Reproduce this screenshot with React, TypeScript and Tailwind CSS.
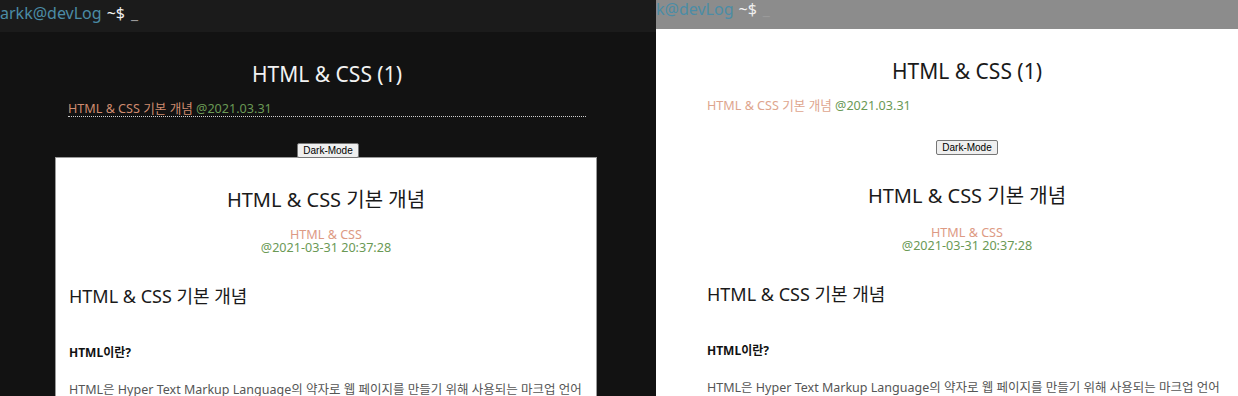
const font = { fontFamily: '"Noto Sans", "Noto Sans CJK KR", sans-serif' }

function Prompt({ name, dark }: { name: string; dark: boolean }) {
  return (
    <div
      className={`flex items-center whitespace-nowrap overflow-hidden text-[16px] ${
        dark ? 'h-[32px] bg-[#1b1b1b] pb-[6px]' : 'h-[29px] bg-[#8c8c8c] pb-[12px]'
      }`}
    >
      <span className="text-[#4b8ca6]">{name}</span>
      <span className="ml-[5px] text-[#f0f0f0]">~$</span>
      <span className="ml-[6px] text-[#9a9a9a]">_</span>
    </div>
  )
}

function DarkButton() {
  return (
    <button
      className="px-[5px] h-[15px] leading-[13px] text-[10px] text-black bg-[#efefef] border border-[#767676] rounded-[2px]"
      style={{ fontFamily: '"Liberation Sans", Arial, sans-serif' }}
    >
      Dark-Mode
    </button>
  )
}

function Article({ tight }: { tight?: boolean }) {
  return (
    <>
      <h1 className="text-center text-[20px] text-[#1a1a1a] leading-[28px]">HTML &amp; CSS 기본 개념</h1>
      <div className={`${tight ? 'mt-[16px]' : 'mt-[14px]'} text-center text-[12.6px] leading-[13px]`}>
        <div className="text-[#dd9a84]">HTML &amp; CSS</div>
        <div className="text-[#6a9955]">@2021-03-31 20:37:28</div>
      </div>
      <h2 className="mt-[30px] text-[18px] text-[#1a1a1a] leading-[24px]">HTML &amp; CSS 기본 개념</h2>
      <h4 className="mt-[37px] text-[12px] font-bold text-[#111] leading-[16px]">HTML이란?</h4>
      <p className="mt-[19px] text-[12.5px] text-[#555] leading-[20px] whitespace-nowrap">
        HTML은 Hyper Text Markup Language의 약자로 웹 페이지를 만들기 위해 사용되는 마크업 언어
      </p>
    </>
  )
}

export default function App() {
  return (
    <div className="flex w-[1238px] h-[396px] overflow-hidden" style={font}>
      <div className="w-[656px] shrink-0 h-full bg-[#121212] overflow-hidden">
        <Prompt name="arkk@devLog" dark />
        <div className="w-[518px] ml-[68px]">
          <h1 className="mt-[28px] text-center text-[21px] text-[#f2f2f2] leading-[28px]">HTML &amp; CSS (1)</h1>
          <div className="mt-[13px] border-b border-dotted border-[#cfcfcf] text-[12.6px] leading-[15px]">
            <span className="text-[#ce8b6f]">HTML &amp; CSS 기본 개념</span>{' '}
            <span className="text-[#6a9955]">@2021.03.31</span>
          </div>
        </div>
        <div className="mt-[26px] flex justify-center">
          <DarkButton />
        </div>
        <div className="ml-[55px] w-[542px] -mt-[1px] bg-white border border-[#9a9a9a] px-[13px] pt-[28px] pb-[20px]">
          <Article />
        </div>
      </div>
      <div className="w-[582px] shrink-0 h-full bg-white overflow-hidden">
        <Prompt name="k@devLog" dark={false} />
        <div className="w-[520px] ml-[51px]">
          <h1 className="mt-[28px] text-center text-[21px] text-[#1a1a1a] leading-[28px]">HTML &amp; CSS (1)</h1>
          <div className="mt-[13px] text-[12.6px] leading-[15px]">
            <span className="text-[#dea58e]">HTML &amp; CSS 기본 개념</span>{' '}
            <span className="text-[#6a9955]">@2021.03.31</span>
          </div>
          <div className="mt-[27px] flex justify-center">
            <DarkButton />
          </div>
          <div className="pt-[27px]">
            <Article tight />
          </div>
        </div>
      </div>
    </div>
  )
}
